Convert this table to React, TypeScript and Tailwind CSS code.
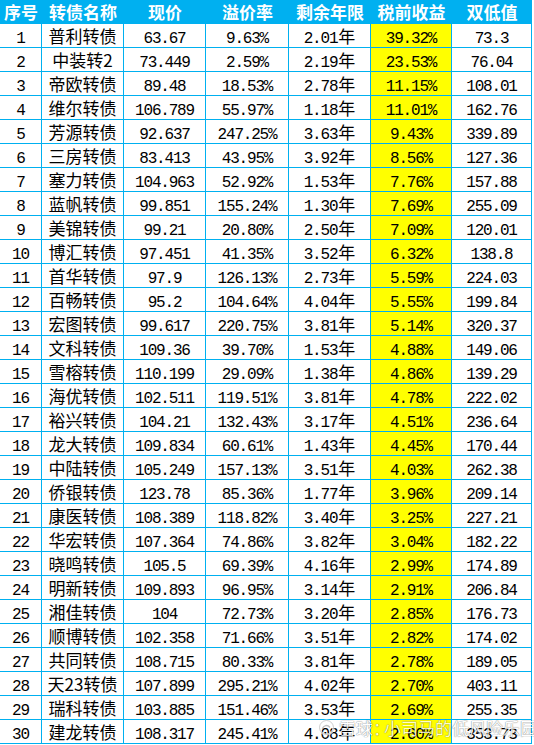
const rows: [string, string, string, string, string, string, string][] = [
  ["1", "普利转债", "63.67", "9.63%", "2.01", "39.32%", "73.3"],
  ["2", "中装转2", "73.449", "2.59%", "2.19", "23.53%", "76.04"],
  ["3", "帝欧转债", "89.48", "18.53%", "2.78", "11.15%", "108.01"],
  ["4", "维尔转债", "106.789", "55.97%", "1.18", "11.01%", "162.76"],
  ["5", "芳源转债", "92.637", "247.25%", "3.63", "9.43%", "339.89"],
  ["6", "三房转债", "83.413", "43.95%", "3.92", "8.56%", "127.36"],
  ["7", "塞力转债", "104.963", "52.92%", "1.53", "7.76%", "157.88"],
  ["8", "蓝帆转债", "99.851", "155.24%", "1.30", "7.69%", "255.09"],
  ["9", "美锦转债", "99.21", "20.80%", "2.50", "7.09%", "120.01"],
  ["10", "博汇转债", "97.451", "41.35%", "3.52", "6.32%", "138.8"],
  ["11", "首华转债", "97.9", "126.13%", "2.73", "5.59%", "224.03"],
  ["12", "百畅转债", "95.2", "104.64%", "4.04", "5.55%", "199.84"],
  ["13", "宏图转债", "99.617", "220.75%", "3.81", "5.14%", "320.37"],
  ["14", "文科转债", "109.36", "39.70%", "1.53", "4.88%", "149.06"],
  ["15", "雪榕转债", "110.199", "29.09%", "1.38", "4.86%", "139.29"],
  ["16", "海优转债", "102.511", "119.51%", "3.81", "4.78%", "222.02"],
  ["17", "裕兴转债", "104.21", "132.43%", "3.17", "4.51%", "236.64"],
  ["18", "龙大转债", "109.834", "60.61%", "1.43", "4.45%", "170.44"],
  ["19", "中陆转债", "105.249", "157.13%", "3.51", "4.03%", "262.38"],
  ["20", "侨银转债", "123.78", "85.36%", "1.77", "3.96%", "209.14"],
  ["21", "康医转债", "108.389", "118.82%", "3.40", "3.25%", "227.21"],
  ["22", "华宏转债", "107.364", "74.86%", "3.82", "3.04%", "182.22"],
  ["23", "晓鸣转债", "105.5", "69.39%", "4.16", "2.99%", "174.89"],
  ["24", "明新转债", "109.893", "96.95%", "3.14", "2.91%", "206.84"],
  ["25", "湘佳转债", "104", "72.73%", "3.20", "2.85%", "176.73"],
  ["26", "顺博转债", "102.358", "71.66%", "3.51", "2.82%", "174.02"],
  ["27", "共同转债", "108.715", "80.33%", "3.81", "2.78%", "189.05"],
  ["28", "天23转债", "107.899", "295.21%", "4.02", "2.70%", "403.11"],
  ["29", "瑞科转债", "103.885", "151.46%", "3.53", "2.69%", "255.35"],
  ["30", "建龙转债", "108.317", "245.41%", "4.08", "2.60%", "353.73"],
];

const headers = ["序号", "转债名称", "现价", "溢价率", "剩余年限", "税前收益", "双低值"];

const cell = "h-[24px] border-r border-b border-[#00b0f0] flex justify-center";
const mono = "font-['Liberation_Mono',monospace] text-[16px] leading-[16px] tracking-[-1.2px] text-black";
const cjk = "font-['Noto_Sans_CJK_SC',sans-serif] text-[17px] text-black";

function Num({ v }: { v: string }) {
  return <span className={mono}>{v}</span>;
}

export default function App() {
  return (
    <div className="relative w-[534px] h-[745px] bg-white overflow-hidden">
      <div className="grid grid-cols-[42px_82px_82px_83px_82px_81px_80px] w-[532px]">
        {headers.map((h) => (
          <div
            key={h}
            className="h-[24px] bg-[#00b0f0] flex items-center justify-center pb-[1px] font-['Noto_Sans_CJK_SC',sans-serif] font-bold text-[17px] leading-[17px] text-white whitespace-nowrap"
          >
            {h}
          </div>
        ))}
        {rows.map((r) => (
          <div key={r[0]} className="contents">
            <div className={`${cell} items-end`}>
              <Num v={r[0]} />
            </div>
            <div className={`${cell} items-center`}>
              <span className={`${cjk} leading-[17px] whitespace-nowrap`}>{r[1]}</span>
            </div>
            <div className={`${cell} items-end`}>
              <Num v={r[2]} />
            </div>
            <div className={`${cell} items-end`}>
              <Num v={r[3]} />
            </div>
            <div className={`${cell} items-end`}>
              <span className="leading-[16px] whitespace-nowrap">
                <span className={mono}>{r[4]}</span>
                <span className={`${cjk} leading-[16px] ml-[1px]`}>年</span>
              </span>
            </div>
            <div className={`${cell} items-end bg-[#ffff00]`}>
              <Num v={r[5]} />
            </div>
            <div className={`${cell} items-end`}>
              <Num v={r[6]} />
            </div>
          </div>
        ))}
      </div>

      {/* watermark */}
      <div className="absolute left-[318px] top-[719px] flex items-center gap-[4px] opacity-80 pointer-events-none">
        <svg width="17" height="17" viewBox="0 0 17 17" fill="none">
          <circle cx="8.5" cy="8.5" r="7" stroke="#ffffff" strokeWidth="2.2" />
          <circle cx="8.5" cy="8.5" r="7" stroke="#9a9a9a" strokeWidth="0.6" />
          <path d="M4.5 9.5c1-3 5-4 7-1.5" stroke="#b0b0b0" strokeWidth="1.4" strokeLinecap="round" />
        </svg>
        <span className="font-['Noto_Sans_CJK_SC',sans-serif] text-[17px] leading-[17px] text-white whitespace-nowrap [text-shadow:0_0_1px_rgba(0,0,0,0.55),0_0_1px_rgba(0,0,0,0.4)]">
          雪球<span className="tracking-[-6px]">：</span>小司马的低风险乐园
        </span>
      </div>
    </div>
  );
}
